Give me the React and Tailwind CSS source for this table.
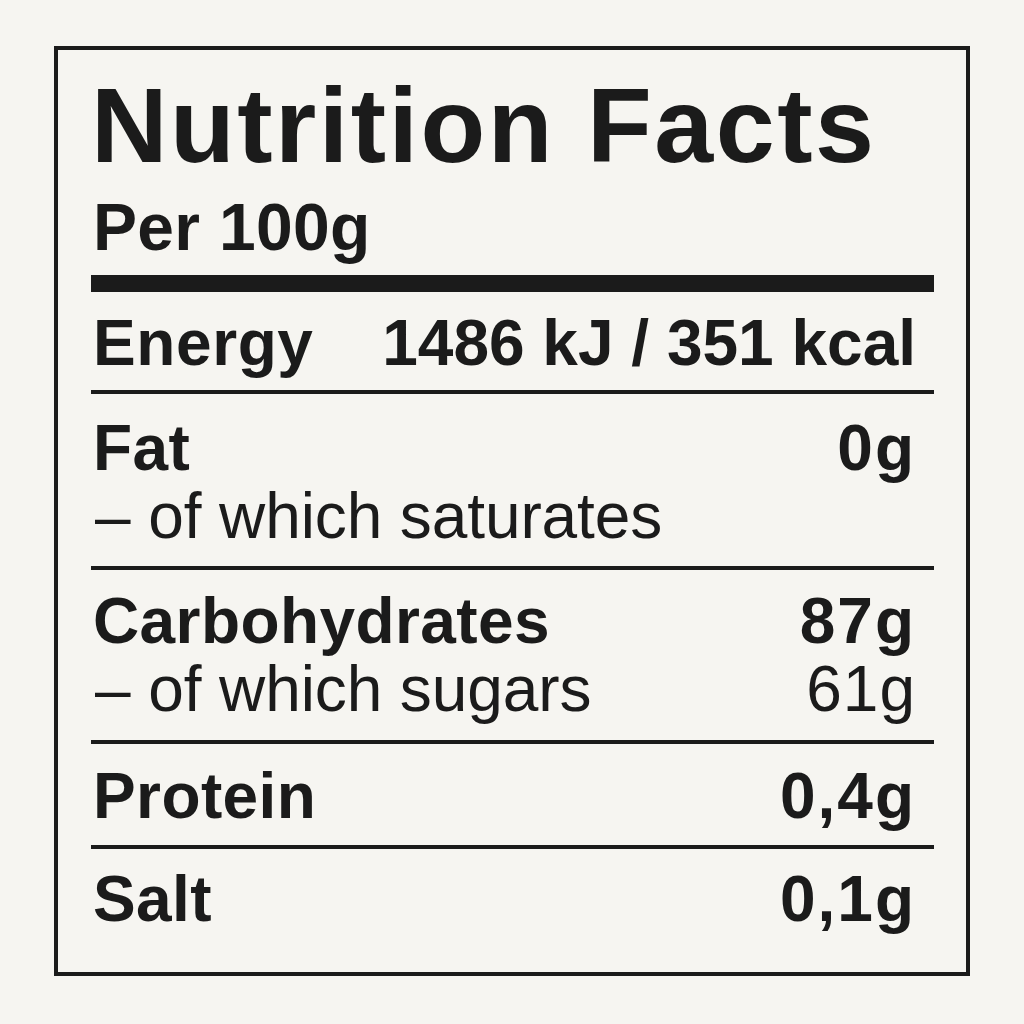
const rows = [
  { label: "Fat", value: "0g", sub: "– of which saturates", subValue: "", pt: "pt-[20px]", pb: "pb-[16px]" },
  { label: "Carbohydrates", value: "87g", sub: "– of which sugars", subValue: "61g", pt: "pt-[17px]", pb: "pb-[17px]" },
  { label: "Protein", value: "0,4g", pt: "pt-[18px]", pb: "pb-[15px]" },
  { label: "Salt", value: "0,1g", pt: "pt-[16px]", pb: "pb-0", last: true },
];

function Row({ label, value, sub, subValue, pt, pb, last }) {
  return (
    <div className={`${pt} ${pb} ${last ? "" : "border-b-4 border-[#1b1b1b]"}`}>
      <div className="flex justify-between items-baseline h-[68px] leading-[68px] text-[64px] font-bold">
        <span className="ml-[2px] tracking-[0.4px]">{label}</span>
        <span className="pr-[18px] tracking-[2px]">{value}</span>
      </div>
      {sub && (
        <div className="flex justify-between items-baseline h-[68px] leading-[68px] text-[64px] font-normal">
          <span className="ml-[4px] tracking-[-0.1px]">{sub}</span>
          <span className="pr-[18px] tracking-[1px]">{subValue}</span>
        </div>
      )}
    </div>
  );
}

export default function App() {
  return (
    <div
      className="w-[1024px] h-[1024px] bg-[#f6f5f1] text-[#1b1b1b] pt-[46px] pl-[54px]"
      style={{ fontFamily: '"Liberation Sans", Arial, sans-serif' }}
    >
      <div className="w-[916px] h-[930px] border-4 border-[#1b1b1b] pl-[33px] pr-[32px] pt-[22px]">
        <h1 className="text-[106px] leading-[106px] font-bold tracking-[2.5px]">Nutrition Facts</h1>
        <div className="mt-[16px] ml-[2px] text-[66px] leading-[66px] font-bold tracking-[0.3px]">Per 100g</div>
        <div className="mt-[15px] h-[17px] bg-[#1b1b1b]" />
        <div className="pt-[17px] pb-[13px] border-b-4 border-[#1b1b1b]">
          <div className="flex justify-between items-baseline h-[68px] leading-[68px] text-[64px] font-bold">
            <span className="ml-[2px] tracking-[0.6px]">Energy</span>
            <span className="pr-[18px]">1486 kJ / 351 kcal</span>
          </div>
        </div>
        {rows.map((r) => (
          <Row key={r.label} {...r} />
        ))}
      </div>
    </div>
  );
}
